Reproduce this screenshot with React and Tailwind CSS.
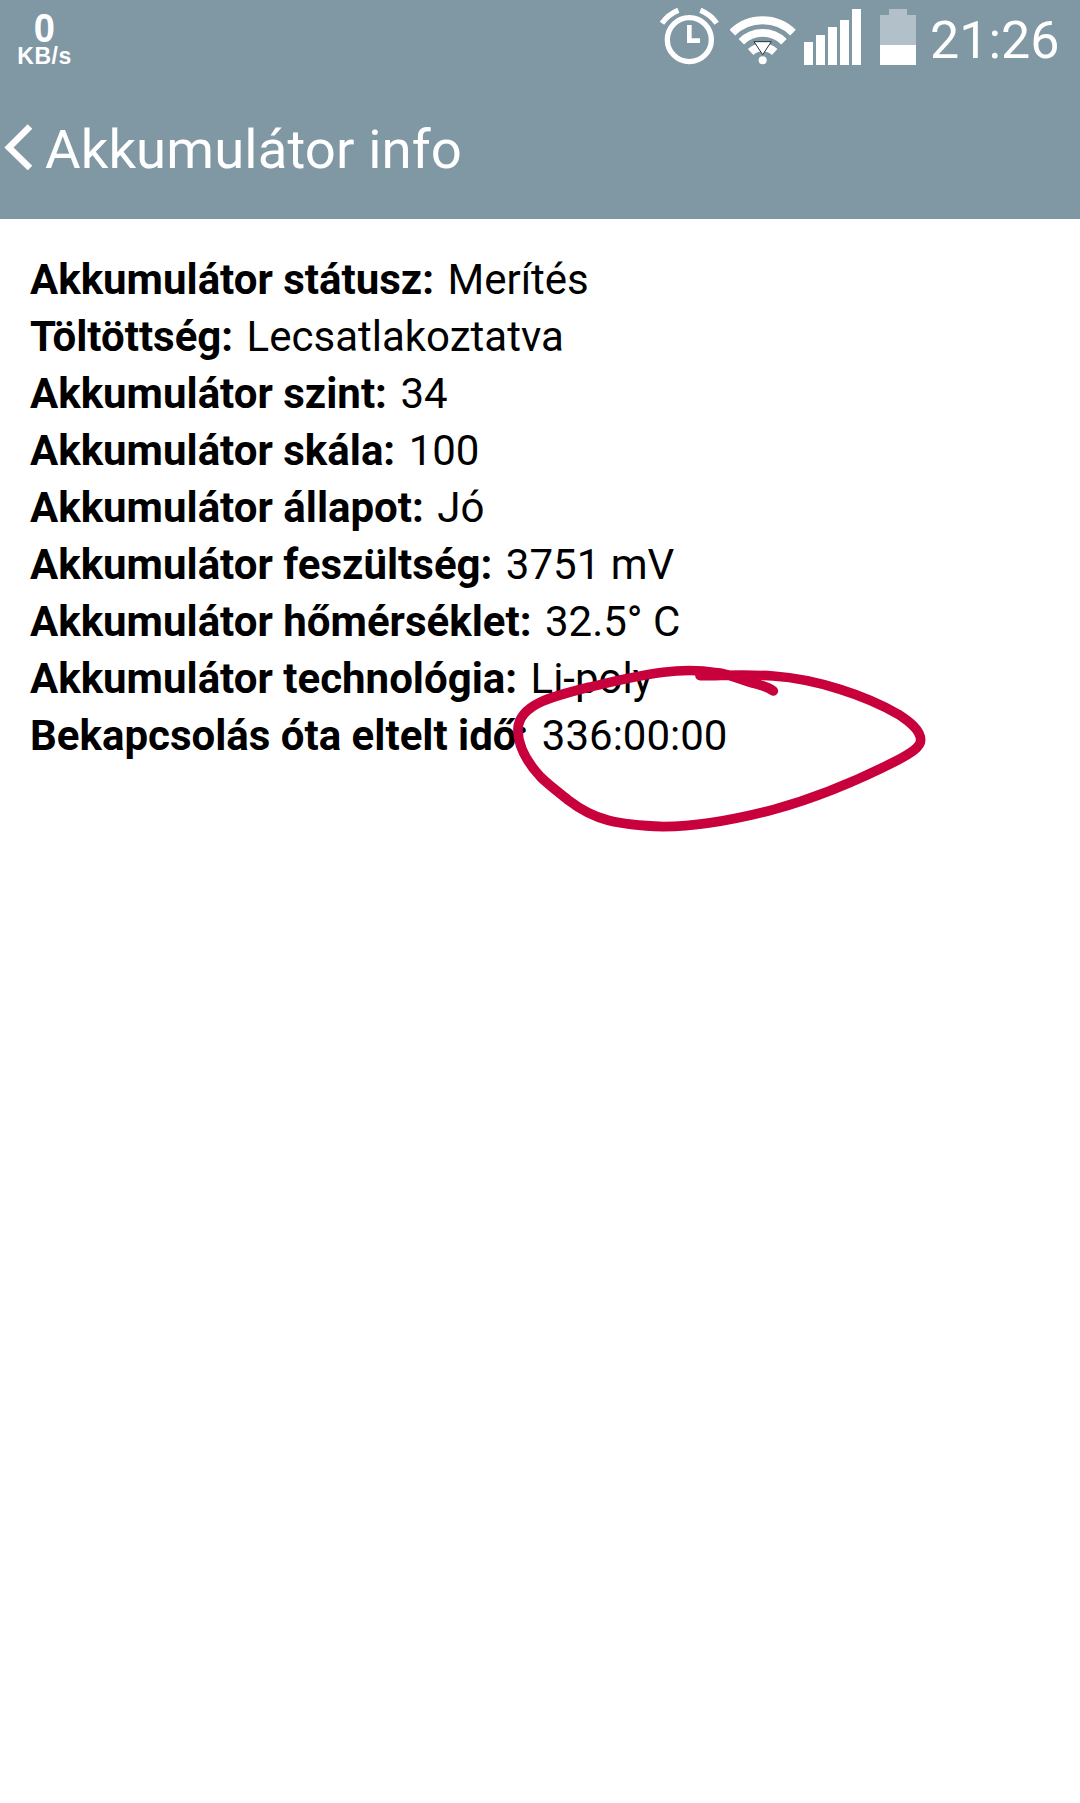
import React from 'react';

const rows = [
    { label: 'Akkumulátor státusz:', value: 'Merítés' },
    { label: 'Töltöttség:', value: 'Lecsatlakoztatva' },
    { label: 'Akkumulátor szint:', value: '34' },
    { label: 'Akkumulátor skála:', value: '100' },
    { label: 'Akkumulátor állapot:', value: 'Jó' },
    { label: 'Akkumulátor feszültség:', value: '3751 mV' },
    { label: 'Akkumulátor hőmérséklet:', value: '32.5° C' },
    { label: 'Akkumulátor technológia:', value: 'Li-poly' },
    { label: 'Bekapcsolás óta eltelt idő:', value: '336:00:00' },
];

const AlarmIcon = () => (
    <svg className="w-[61px] h-[58px]" viewBox="57 21 183 174" fill="none" stroke="#fff">
        <circle cx="148" cy="119" r="66" strokeWidth="16" />
        <path d="M148 75v47h32" strokeWidth="14" />
        <path d="M66 70Q84 44 115 31M230 70Q212 44 181 31" strokeWidth="16" />
    </svg>
);

const WifiIcon = () => (
    <svg className="w-[66px] h-[58px]" viewBox="270 21 198 174" fill="none" stroke="#fff">
        <path d="M277 98A130 130 0 0 1 459 98" strokeWidth="24" />
        <path d="M304 125A91 91 0 0 1 432 125" strokeWidth="23" />
        <path d="M332 156A52 52 0 0 1 404 156" strokeWidth="24" />
        <circle cx="368" cy="181" r="12" fill="#fff" stroke="none" />
        <path d="M342 125H394L368 164Z" fill="#fff" stroke="#26323a" strokeWidth="3" />
    </svg>
);

const SignalIcon = () => (
    <svg className="w-[57px] h-[58px]" viewBox="0 0 57 58" fill="#fff">
        <path d="M0 35h9v23H0zM12 28h9v30h-9zM24 20h9v38h-9zM36 13h9v45h-9zM48 2h9v56h-9z" />
    </svg>
);

const BatteryIcon = () => (
    <svg className="w-9 h-[58px]" viewBox="0 0 36 58">
        <path d="M9 2h18v6h9v30H0V8h9z" fill="#b2c1c9" />
        <path d="M0 38h36v20H0z" fill="#fff" />
    </svg>
);

const StatusBar = () => (
    <div className="h-[75px] flex justify-between items-start">
        <div className="w-[89px] pt-[11px] flex flex-col items-center font-['Liberation_Sans',sans-serif]">
            <span className="text-[41px] leading-[34px] font-bold scale-x-[0.93]">0</span>
            <span className="text-[23px] leading-[22px] tracking-[0.5px] font-bold">KB/s</span>
        </div>
        <div className="flex items-start pt-[7px] pr-[22px]">
            <AlarmIcon />
            <div className="ml-[10px]"><WifiIcon /></div>
            <div className="ml-2"><SignalIcon /></div>
            <div className="ml-[19px]"><BatteryIcon /></div>
            <span className="w-[128px] ml-[14px] text-[52px] leading-[67px] whitespace-nowrap">21:26</span>
        </div>
    </div>
);

const TitleBar = () => (
    <div className="h-[144px] flex items-start">
        <svg className="w-[46px] h-[46px] mt-[49px] shrink-0" viewBox="0 0 46 46" fill="none" stroke="#fff" strokeWidth="6.500">
            <path d="M30 2.500L9 23.500L30 44" />
        </svg>
        <h1 className="-ml-px mt-[41px] text-[54.500px] leading-[66px] tracking-[0.1px] font-normal">Akkumulátor info</h1>
    </div>
);

// hand-drawn loop around the uptime value
const Scribble = () => (
    <svg className="absolute left-[500px] top-[640px] w-[440px] h-[200px]" viewBox="0 0 1320 600" fill="none" stroke="#c8003c" strokeWidth="29" strokeLinecap="round" strokeLinejoin="round">
        <path d="M820 153C803 139 785 137 765 131C730 122 690 103 650 98C600 90 540 90 490 97C410 107 340 125 265 142C205 157 160 168 120 187C75 209 56 235 54 265C52 315 82 368 122 411C145 434 180 460 207 482C282 540 350 555 490 560C610 559 740 530 820 509C950 473 1090 413 1190 362C1230 341 1262 322 1262 300C1262 270 1230 246 1195 223C1100 167 950 117 820 108C740 102 670 107 600 107" />
    </svg>
);

export default function App() {
    return (
        <div className="relative w-[1080px] h-[1803px] overflow-hidden bg-white text-black font-[Roboto,sans-serif]">
            <header className="h-[219px] bg-[#8097a4] text-white">
                <StatusBar />
                <TitleBar />
            </header>
            <main className="pt-8 pl-[30px]">
                {rows.map(({ label, value }) => (
                    <p key={label} className="text-[42px] leading-[57px] whitespace-nowrap">
                        <b className="font-bold">{label}</b> <span className="ml-[3px]">{value}</span>
                    </p>
                ))}
            </main>
            <Scribble />
        </div>
    );
}
